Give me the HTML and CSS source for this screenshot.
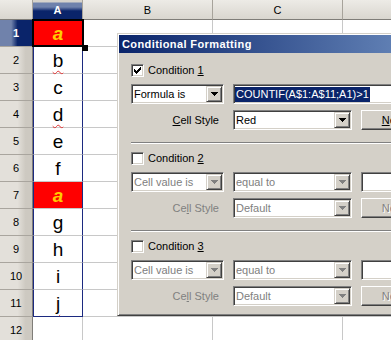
FILE: index.html
```html
<!DOCTYPE html>
<html>
<head>
<meta charset="utf-8">
<link rel="stylesheet" href="styles.css">
</head>
<body>
<div class="sheet">
  <div class="grid">
    <div class="ch corner"></div>
    <div class="ch ch-sel">A</div>
    <div class="ch">B</div>
    <div class="ch">C</div>
    <div class="ch"></div>

    <div class="rh rh-sel">1</div><div class="c a red"><span class="hl">a</span></div><div class="c"></div><div class="c"></div><div class="c"></div>
    <div class="rh">2</div><div class="c a"><span class="sp">b</span></div><div class="c"></div><div class="c"></div><div class="c"></div>
    <div class="rh">3</div><div class="c a">c</div><div class="c"></div><div class="c"></div><div class="c"></div>
    <div class="rh">4</div><div class="c a"><span class="sp">d</span></div><div class="c"></div><div class="c"></div><div class="c"></div>
    <div class="rh">5</div><div class="c a">e</div><div class="c"></div><div class="c"></div><div class="c"></div>
    <div class="rh">6</div><div class="c a">f</div><div class="c"></div><div class="c"></div><div class="c"></div>
    <div class="rh">7</div><div class="c a red"><span class="hl">a</span></div><div class="c"></div><div class="c"></div><div class="c"></div>
    <div class="rh">8</div><div class="c a">g</div><div class="c"></div><div class="c"></div><div class="c"></div>
    <div class="rh">9</div><div class="c a">h</div><div class="c"></div><div class="c"></div><div class="c"></div>
    <div class="rh">10</div><div class="c a">i</div><div class="c"></div><div class="c"></div><div class="c"></div>
    <div class="rh">11</div><div class="c a a-last"><span class="sp">j</span></div><div class="c"></div><div class="c"></div><div class="c"></div>
    <div class="rh">12</div><div class="c"></div><div class="c"></div><div class="c"></div><div class="c"></div>
  </div>
  <div class="cursor"></div>
  <div class="handle"></div>

  <div class="dialog">
    <div class="title">Conditional Formatting</div>
    <div class="dbody">
      <div class="cond">
        <div class="cond-head">
          <span class="chk"><svg width="7" height="7" viewBox="0 0 7 7" shape-rendering="crispEdges"><path d="M0 2h1v3H0zM1 3h1v3H1zM2 4h1v3H2zM3 3h1v3H3zM4 2h1v3H4zM5 1h1v3H5zM6 0h1v3H6z" fill="#000"/></svg></span>
          <span>Condition <u>1</u></span>
        </div>
        <div class="row r1">
          <div class="combo"><span class="val">Formula is</span><span class="btn"><svg width="7" height="4" viewBox="0 0 7 4" shape-rendering="crispEdges"><path d="M0 0h7v1H0zM1 1h5v1H1zM2 2h3v1H2zM3 3h1v1H3z" fill="#000"/></svg></span></div>
          <div class="field"><span class="selected">COUNTIF(A$1:A$11;A1)&gt;1</span></div>
        </div>
        <div class="row r2">
          <span class="lbl"><u>C</u>ell Style</span>
          <div class="combo wide"><span class="val">Red</span><span class="btn"><svg width="7" height="4" viewBox="0 0 7 4" shape-rendering="crispEdges"><path d="M0 0h7v1H0zM1 1h5v1H1zM2 2h3v1H2zM3 3h1v1H3z" fill="#000"/></svg></span></div>
          <div class="button"><u>N</u>ew...</div>
        </div>
      </div>
      <div class="sep"></div>

      <div class="cond">
        <div class="cond-head">
          <span class="chk"></span>
          <span>Condition <u>2</u></span>
        </div>
        <div class="row r1 dis">
          <div class="combo"><span class="val">Cell value is</span><span class="btn"><svg width="7" height="4" viewBox="0 0 7 4" shape-rendering="crispEdges"><path d="M0 0h7v1H0zM1 1h5v1H1zM2 2h3v1H2zM3 3h1v1H3z" fill="#808080"/></svg></span></div>
          <div class="combo wide"><span class="val">equal to</span><span class="btn"><svg width="7" height="4" viewBox="0 0 7 4" shape-rendering="crispEdges"><path d="M0 0h7v1H0zM1 1h5v1H1zM2 2h3v1H2zM3 3h1v1H3z" fill="#808080"/></svg></span></div>
          <div class="field"></div>
        </div>
        <div class="row r2 dis">
          <span class="lbl">Ce<u>l</u>l Style</span>
          <div class="combo wide"><span class="val">Default</span><span class="btn"><svg width="7" height="4" viewBox="0 0 7 4" shape-rendering="crispEdges"><path d="M0 0h7v1H0zM1 1h5v1H1zM2 2h3v1H2zM3 3h1v1H3z" fill="#808080"/></svg></span></div>
          <div class="button">New...</div>
        </div>
      </div>
      <div class="sep"></div>

      <div class="cond">
        <div class="cond-head">
          <span class="chk"></span>
          <span>Condition <u>3</u></span>
        </div>
        <div class="row r1 dis">
          <div class="combo"><span class="val">Cell value is</span><span class="btn"><svg width="7" height="4" viewBox="0 0 7 4" shape-rendering="crispEdges"><path d="M0 0h7v1H0zM1 1h5v1H1zM2 2h3v1H2zM3 3h1v1H3z" fill="#808080"/></svg></span></div>
          <div class="combo wide"><span class="val">equal to</span><span class="btn"><svg width="7" height="4" viewBox="0 0 7 4" shape-rendering="crispEdges"><path d="M0 0h7v1H0zM1 1h5v1H1zM2 2h3v1H2zM3 3h1v1H3z" fill="#808080"/></svg></span></div>
          <div class="field"></div>
        </div>
        <div class="row r2 dis">
          <span class="lbl">Ce<u>l</u>l Style</span>
          <div class="combo wide"><span class="val">Default</span><span class="btn"><svg width="7" height="4" viewBox="0 0 7 4" shape-rendering="crispEdges"><path d="M0 0h7v1H0zM1 1h5v1H1zM2 2h3v1H2zM3 3h1v1H3z" fill="#808080"/></svg></span></div>
          <div class="button">New...</div>
        </div>
      </div>
    </div>
  </div>
</div>
</body>
</html>
```
FILE: styles.css
```css
html, body {
  margin: 0;
  padding: 0;
  width: 391px;
  height: 340px;
  overflow: hidden;
  background: #fff;
}

.sheet {
  position: relative;
  width: 391px;
  height: 340px;
  overflow: hidden;
  font-family: "Liberation Sans", Arial, sans-serif;
}

.grid {
  display: grid;
  grid-template-columns: 33px 50px 130px 130px 60px;
  grid-template-rows: 20px repeat(12, 27px);
  width: 403px;
}

.grid > div {
  box-sizing: border-box;
}

.ch {
  background: linear-gradient(#edebe6, #d9d6cf);
  border-right: 1px solid #a7a39b;
  border-bottom: 1px solid #7f7d78;
  font-size: 11px;
  color: #000;
  display: flex;
  align-items: center;
  justify-content: center;
}

.ch-sel {
  background: linear-gradient(#d6d3cc 0, #d6d3cc 2px, #6f82ac 3px, #6f82ac 7px, #0a246a 11px);
  color: #fff;
  font-weight: bold;
}

.rh {
  background: linear-gradient(to right, #e3e0da 55%, #cdc9c1 80%);
  border-right: 1px solid #7f7d78;
  border-bottom: 1px solid #a9a59e;
  font-size: 11px;
  color: #000;
  display: flex;
  align-items: center;
  justify-content: center;
}

.rh-sel {
  background: linear-gradient(to right, #7082ab 35%, #0a246a 55%);
  color: #fff;
  font-weight: bold;
}

.c {
  border-right: 1px solid #c8c8c8;
  border-bottom: 1px solid #c8c8c8;
}

.a {
  border-left: 1px solid #1c2a80;
  border-right: 1px solid #1c2a80;
  font-size: 19px;
  color: #000;
  display: flex;
  align-items: center;
  justify-content: center;
  padding-top: 1px;
}

.a-last {
  border-bottom: 1px solid #1c2a80;
}

.red {
  background: #ff0000;
}

.hl {
  color: #ffcc00;
  font-style: italic;
  font-weight: bold;
}

.sp {
  text-decoration: underline wavy #e03030;
  text-decoration-thickness: 1px;
  text-underline-offset: 3px;
}

.cursor {
  position: absolute;
  left: 32px;
  top: 19px;
  width: 52px;
  height: 28px;
  border: 2px solid #000;
  box-sizing: border-box;
}

.handle {
  position: absolute;
  left: 82px;
  top: 45px;
  width: 6px;
  height: 6px;
  background: #000;
}

/* dialog */
.dialog {
  position: absolute;
  left: 117px;
  top: 33px;
  width: 330px;
  padding: 1px;
  background: #d4d0c8;
  border: 1px solid;
  border-color: #d4d0c8 #404040 #404040 #d4d0c8;
  box-shadow: inset 1px 1px #fff, inset -1px -1px #808080;
  font-family: "Liberation Sans", Arial, sans-serif;
  font-size: 11px;
  color: #000;
}

.title {
  height: 18px;
  line-height: 18px;
  padding-left: 3px;
  background: linear-gradient(to right, #0a246a 0, #a6caf0 500px);
  color: #fff;
  font-weight: bold;
  letter-spacing: 0.4px;
  white-space: nowrap;
}

.dbody {
  padding: 7px 0 8px 12px;
}

.cond-head {
  height: 20px;
  display: flex;
  align-items: center;
  gap: 4px;
}

.chk {
  width: 13px;
  height: 13px;
  box-sizing: border-box;
  background: #fff;
  border: 1px solid;
  border-color: #808080 #fff #fff #808080;
  box-shadow: inset 1px 1px #404040, inset -1px -1px #d4d0c8;
  display: flex;
  align-items: center;
  justify-content: center;
}

.row {
  display: flex;
  gap: 9px;
  height: 20px;
  white-space: nowrap;
}

.r1 {
  margin-top: 4px;
}

.r2 {
  margin-top: 6px;
}

.combo {
  width: 93px;
  height: 20px;
  box-sizing: border-box;
  flex: none;
  background: #fff;
  border: 1px solid;
  border-color: #808080 #fff #fff #808080;
  box-shadow: inset 1px 1px #404040, inset -1px -1px #d4d0c8;
  padding: 1px 1px 1px 2px;
  display: flex;
  align-items: center;
}

.combo.wide {
  width: 119px;
}

.val {
  flex: 1;
  overflow: hidden;
}

.btn {
  width: 16px;
  height: 16px;
  box-sizing: border-box;
  flex: none;
  background: #d4d0c8;
  border: 1px solid;
  border-color: #d4d0c8 #404040 #404040 #d4d0c8;
  box-shadow: inset 1px 1px #fff, inset -1px -1px #808080;
  display: flex;
  align-items: center;
  justify-content: center;
}

.field {
  flex: 1;
  height: 20px;
  box-sizing: border-box;
  background: #fff;
  border: 1px solid;
  border-color: #808080 #fff #fff #808080;
  box-shadow: inset 1px 1px #404040, inset -1px -1px #d4d0c8;
  padding: 1px 1px 1px 1px;
  display: flex;
  align-items: center;
}

.selected {
  background: #0a246a;
  color: #fff;
  line-height: 15px;
  padding: 0 1px;
}

.lbl {
  width: 93px;
  flex: none;
  box-sizing: border-box;
  text-align: right;
  padding-right: 5px;
  line-height: 20px;
}

.button {
  width: 72px;
  height: 20px;
  box-sizing: border-box;
  flex: none;
  background: #d4d0c8;
  border: 1px solid;
  border-color: #fff #404040 #404040 #fff;
  box-shadow: inset -1px -1px #808080;
  display: flex;
  align-items: center;
  justify-content: center;
}

.dis .val,
.dis .lbl,
.dis .button {
  color: #808080;
}

.dis .button {
  text-shadow: 1px 1px #fff;
}

.sep {
  margin: 12px 0 4px;
  height: 2px;
  box-sizing: border-box;
  border-top: 1px solid #808080;
  border-bottom: 1px solid #fff;
}
```
